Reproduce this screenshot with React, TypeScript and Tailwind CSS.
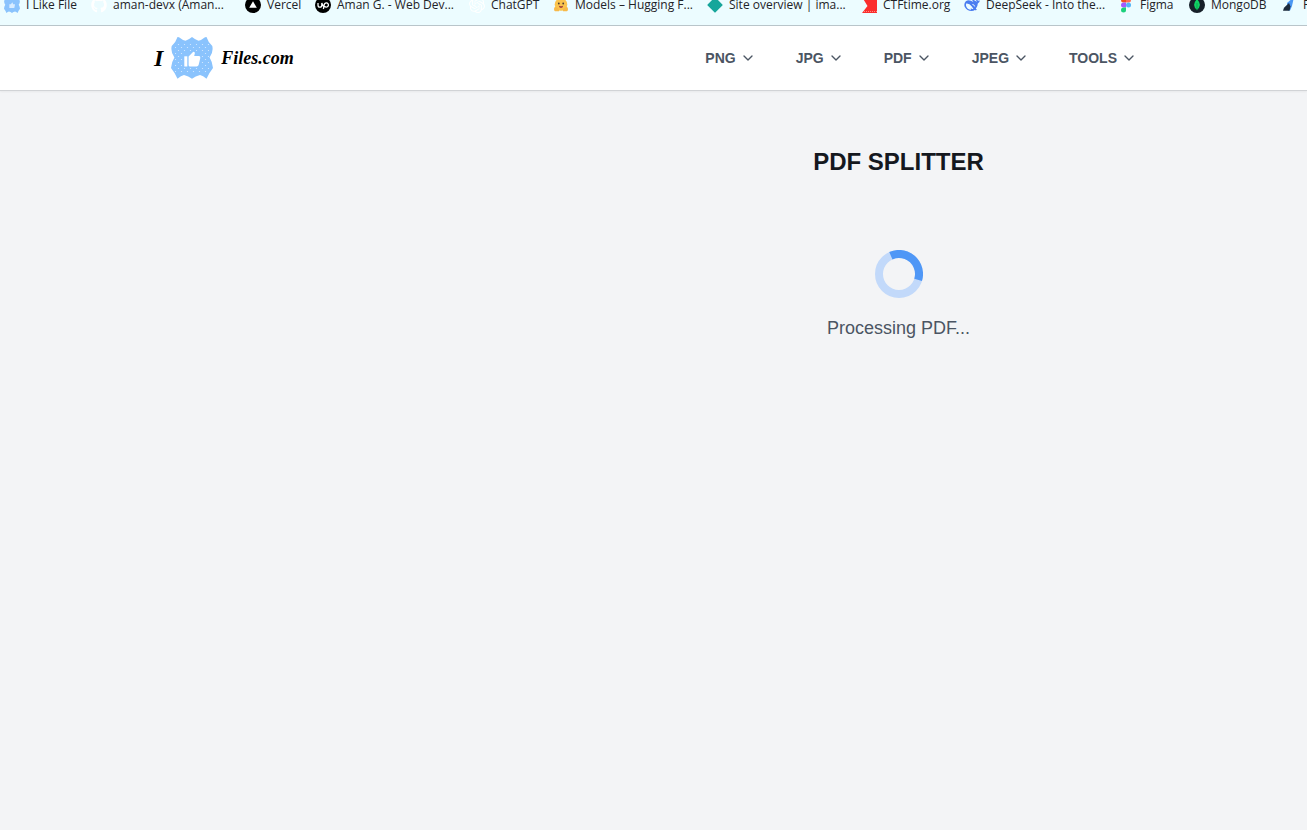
import React from "react";
import { ChevronDown } from "lucide-react";
import { FaGithub } from "react-icons/fa";
import { SiOpenai } from "react-icons/si";

const icon = "h-4 w-4 shrink-0";

function BadgeShape() {
  return (
    <path
      fill="#8ac3fd"
      d="M6.5 0 L8 0.3 Q12 3.5 14.5 3.8 Q18 2.5 21 0 Q24 2.5 27.5 3.8 Q30 3.5 34 0.3 L35.5 0 Q37 5 41.3 9 Q42.6 15 38.6 20.5 Q41.5 25 42 31 Q38 36 35.5 41.7 Q32 38.6 29 38 Q24.5 39 21 41.7 Q17.5 39 13 38 Q10 38.6 6.5 41.7 Q4 36 0 31 Q0.5 25 3.4 20.5 Q-0.6 15 0.7 9 Q5 5 6.5 0 Z"
    />
  );
}

function LogoBadge() {
  return (
    <svg viewBox="0 0 42 42" className="h-[42px] w-[42px] shrink-0" aria-hidden="true">
      <defs>
        <pattern id="dots" width="6" height="6" patternUnits="userSpaceOnUse">
          <circle cx="1.5" cy="1.5" r="0.6" fill="#d9ecff" />
          <circle cx="4.5" cy="4.5" r="0.6" fill="#d9ecff" />
        </pattern>
      </defs>
      <BadgeShape />
      <rect x="4" y="5" width="34" height="32" fill="url(#dots)" />
      <path fill="#8ac3fd" d="M12 14h18v16H12z" />
      <path fill="#fff" d="M13.3 19.3h3v10.2h-3z" />
      <path
        fill="#fff"
        d="M17.6 19.6 L22 14.9 Q22.8 14.4 23.6 15.2 Q24 15.7 23.8 16.5 L23.2 19 H28 Q29.5 19.2 29.3 21 L27.6 28 Q27.2 29.4 25.7 29.5 H19 Q17.7 29.4 17.6 28.2 Z"
      />
    </svg>
  );
}

function ILikeIcon() {
  return (
    <svg viewBox="0 0 42 42" className={icon} aria-hidden="true">
      <BadgeShape />
      <path fill="#d8ecff" d="M14 19h4l4-5 2 5h5l-2 10H14z" />
    </svg>
  );
}

function VercelIcon() {
  return (
    <svg viewBox="0 0 16 16" className={icon} aria-hidden="true">
      <circle cx="8" cy="8" r="8" fill="#000" />
      <path d="M8 4.3 L11.8 10.8 H4.2 Z" fill="#fff" />
    </svg>
  );
}

function UpworkIcon() {
  return (
    <svg viewBox="0 0 16 16" className={icon} aria-hidden="true">
      <circle cx="8" cy="8" r="8" fill="#000" />
      <path
        d="M3 6v2.2a1.9 1.9 0 0 0 3.8 0V6 C7.4 8 8 9 9 9.8 M8.4 12 L9.2 8 A2.1 2.1 0 1 1 10.8 10 Q9.4 10 8.4 8.2"
        fill="none"
        stroke="#fff"
        strokeWidth="1.3"
      />
    </svg>
  );
}

function HuggingIcon() {
  return (
    <svg viewBox="0 0 16 16" className={icon} aria-hidden="true">
      <circle cx="8" cy="7.5" r="6.3" fill="#fbc44d" />
      <path d="M1 12 Q1 9.5 3 10 L6 12 V14.2 H2 Q1 14 1 12 M15 12 Q15 9.5 13 10 L10 12 V14.2 H14 Q15 14 15 12" fill="#f7b94a" />
      <circle cx="5.8" cy="6.5" r="0.9" fill="#4a3b33" />
      <circle cx="10.2" cy="6.5" r="0.9" fill="#4a3b33" />
      <path d="M5.8 8.7 Q8 9.6 10.2 8.7 Q9.8 11 8 11 Q6.2 11 5.8 8.7" fill="#a2403b" />
    </svg>
  );
}

function DiamondIcon() {
  return (
    <svg viewBox="0 0 16 16" className={icon} aria-hidden="true">
      <path d="M8 1.2 L14.8 8 L8 14.8 L1.2 8 Z" fill="#17a69b" stroke="#17a69b" strokeWidth="1.6" strokeLinejoin="round" />
    </svg>
  );
}

function CtfIcon() {
  return (
    <svg viewBox="0 0 16 16" className={icon} aria-hidden="true">
      <path d="M1 0 H16 V16 H1 L6.5 9 Z" fill="#fb2d2d" />
      <path d="M3 14.5 H16" stroke="#ff8a80" strokeDasharray="1 1" />
    </svg>
  );
}

function WhaleIcon() {
  return (
    <svg viewBox="0 0 16 16" className={icon} aria-hidden="true">
      <path
        fill="#4a7df0"
        d="M15.8 3.2 Q15.2 3.8 14.2 3.6 Q12.8 3.3 12.2 2 Q11.8 3.6 13 5 Q10.6 3.2 9 2.8 L8.2 3.4 Q9 4.6 9.6 5.2 Q5 2 1.8 4.2 Q-0.5 6.6 0.8 10 Q3 14 7.6 14 Q9.6 14 10.8 12.9 Q12 13.4 13 12.8 L11.8 11.7 Q13.8 9.4 13.8 6.6 Q15.8 5.8 15.8 3.2"
      />
      <path fill="#ecfcff" d="M2.2 6.6 Q5.4 6.2 7.8 9.6 Q9 11.4 9.4 12.1 Q7.8 12.2 6.8 10.9 Q6.8 12 7.2 12.7 Q3 12.5 2.1 9 Q1.8 7.7 2.2 6.6" />
      <path fill="none" stroke="#ecfcff" strokeWidth="0.9" d="M8.4 7.5 Q10.3 7.4 10.7 9.5" />
    </svg>
  );
}

function FigmaIcon() {
  return (
    <svg viewBox="0 0 16 16" className={icon} aria-hidden="true">
      <path d="M8 0.5 H5.5 a2.5 2.5 0 0 0 0 5 H8z" fill="#f24e1e" />
      <path d="M8 0.5 h2.5 a2.5 2.5 0 0 1 0 5 H8z" fill="#ff6d57" />
      <path d="M8 5.5 H5.5 a2.5 2.5 0 0 0 0 5 H8z" fill="#a259ff" />
      <circle cx="10.5" cy="8" r="2.5" fill="#52b5f9" />
      <path d="M8 10.5 H5.5 a2.5 2.5 0 1 0 2.5 2.5z" fill="#1bd07c" />
    </svg>
  );
}

function MongoIcon() {
  return (
    <svg viewBox="0 0 16 16" className={icon} aria-hidden="true">
      <circle cx="8" cy="8" r="8" fill="#17202a" />
      <path d="M8 2.2 Q11 5 10.9 8 Q10.6 11 8.3 12.4 L8 13.8 L7.7 12.4 Q5.3 11 5.1 8 Q5 5 8 2.2" fill="#10d264" />
      <path d="M8 6v7" stroke="#0a8a45" strokeWidth="0.6" />
    </svg>
  );
}

function SailIcon() {
  return (
    <svg viewBox="0 0 16 16" className={icon} aria-hidden="true">
      <path d="M6 6 L13 0 L11 9 L9 13.5 H7 Z" fill="#4b97f3" />
      <path d="M8 6 L3 10.8 L2 13.8 H8.5 L9.5 9.5 Z" fill="#1d2b3c" />
    </svg>
  );
}

const bookmarks = [
  { label: "I Like File", width: "w-[49px]", icon: <ILikeIcon /> },
  { label: "aman-devx (Aman...", width: "w-[116px]", icon: <FaGithub className={icon} color="#fff" /> },
  { label: "Vercel", width: "w-8", icon: <VercelIcon /> },
  { label: "Aman G. - Web Dev...", width: "w-[116px]", icon: <UpworkIcon /> },
  { label: "ChatGPT", width: "w-[46px]", icon: <SiOpenai className={icon} color="#fff" /> },
  { label: "Models – Hugging F...", width: "w-[116px]", icon: <HuggingIcon /> },
  { label: "Site overview | ima...", width: "w-[116px]", icon: <DiamondIcon /> },
  { label: "CTFtime.org", width: "w-[65px]", icon: <CtfIcon /> },
  { label: "DeepSeek - Into the...", width: "w-[116px]", icon: <WhaleIcon /> },
  { label: "Figma", width: "w-[33px]", icon: <FigmaIcon /> },
  { label: "MongoDB", width: "w-[54px]", icon: <MongoIcon /> },
  { label: "F", width: "w-[54px]", icon: <SailIcon /> },
];

const menus = ["PNG", "JPG", "PDF", "JPEG", "TOOLS"];

export default function App() {
  return (
    <div className="min-h-screen overflow-hidden bg-[#f3f4f6] font-['Liberation_Sans',Arial,sans-serif]">
      <nav aria-label="Bookmarks" className="h-[26px] overflow-hidden border-b border-[#b9c5ca] bg-[#ecfcff]">
        <ul className="-mt-[3px] flex h-4 items-center gap-4 pl-1">
          {bookmarks.map((b) => (
            <li key={b.label} className="shrink-0">
              <a
                href="#"
                className="flex items-center gap-1.5 font-['Open_Sans','Noto_Sans',sans-serif] text-xs leading-4 whitespace-nowrap text-[#1f2328]"
              >
                {b.icon}
                <span className={b.width}>{b.label}</span>
              </a>
            </li>
          ))}
        </ul>
      </nav>

      <header className="flex h-[65px] items-center justify-between border-b border-[#d1d3d6] bg-white pr-[170px] pl-[154px] shadow-xs">
        <a
          href="#"
          className="flex items-center gap-2 font-['Liberation_Serif',serif] text-lg font-bold text-black italic"
        >
          <span className="text-2xl">I</span>
          <LogoBadge />
          <span>Files.com</span>
        </a>
        <nav aria-label="Main" className="flex items-center gap-10">
          {menus.map((m) => (
            <button key={m} type="button" className="flex items-center gap-1 text-sm font-bold text-[#4b5563]">
              {m}
              <ChevronDown size={16} aria-hidden="true" />
            </button>
          ))}
        </nav>
      </header>

      <main className="flex flex-col items-center pt-[55px] pl-[490px]">
        <h1 className="text-2xl font-bold text-[#15181e]">PDF SPLITTER</h1>
        <div role="status" className="mt-[72px] flex flex-col items-center gap-4">
          <svg viewBox="0 0 48 48" className="h-12 w-12" aria-hidden="true">
            <circle cx="24" cy="24" r="20" fill="none" stroke="#c2d9fa" strokeWidth="8" />
            <circle
              cx="24"
              cy="24"
              r="20"
              fill="none"
              stroke="#4f97f6"
              strokeWidth="8"
              pathLength="360"
              strokeDasharray="131 229"
              transform="rotate(-114 24 24)"
            />
          </svg>
          <p className="text-lg text-[#4b5563]">Processing PDF...</p>
        </div>
      </main>
    </div>
  );
}
